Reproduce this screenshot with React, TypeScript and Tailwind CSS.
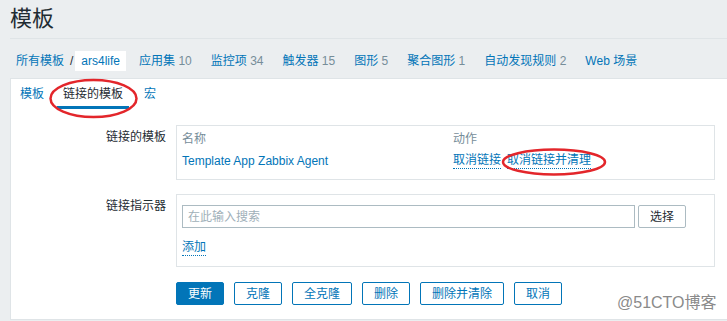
export default function App() {
  const nav: [string, string][] = [
    ["应用集", "10"],
    ["监控项", "34"],
    ["触发器", "15"],
    ["图形", "5"],
    ["聚合图形", "1"],
    ["自动发现规则", "2"],
    ["Web 场景", ""],
  ];
  const buttons = ["克隆", "全克隆", "删除", "删除并清除", "取消"];
  return (
    <div className="relative w-[727px] h-[321px] overflow-hidden bg-[#ebeef0] text-[12px] leading-[16px] text-[#1f2c33] font-[family-name:'Liberation_Sans','Noto_Sans_CJK_SC',sans-serif]">
      {/* title */}
      <div className="ml-[10px] h-[39px] border-b border-[#dfe4e7] pt-[6px]">
        <h1 className="text-[22px] leading-[26px] font-normal">模板</h1>
      </div>
      {/* breadcrumbs */}
      <div className="h-[39px] pt-[12px] flex items-start">
        <span className="pl-[16px] h-[20px] leading-[20px] text-[#0275b8]">所有模板</span>
        <span className="ml-[6px] mr-[2px] h-[20px] leading-[20px]">/</span>
        <span className="px-[6px] h-[20px] leading-[20px] bg-white text-[#0275b8]">ars4life</span>
        <div className="flex ml-[7px] gap-[7px]">
          {nav.map(([t, n]) => (
            <span key={t} className="px-[6px] h-[20px] leading-[20px] text-[#0275b8] whitespace-nowrap">
              {t}
              {n && <span className="text-[#768d99]"> {n}</span>}
            </span>
          ))}
        </div>
      </div>
      {/* panel */}
      <div className="ml-[10px] h-[242px] bg-white border-t border-l border-b border-[#dfe4e7]">
        {/* tabs */}
        <div className="h-[30px] flex pl-[3px]">
          <span className="px-[6px] flex items-center border-y-[3px] border-transparent text-[#0275b8]">模板</span>
          <span className="ml-[7px] px-[6px] flex items-center border-y-[3px] border-t-transparent border-b-[#0275b8] text-[#1f2c33]">链接的模板</span>
          <span className="ml-[9px] px-[6px] flex items-center border-y-[3px] border-transparent text-[#0275b8]">宏</span>
        </div>
        {/* row 1 */}
        <div className="mt-[16px] flex">
          <div className="w-[155px] text-right pt-[4px]">链接的模板</div>
          <div className="ml-[10px] w-[539px] border border-[#dfe4e7] pl-[5px] pt-[5px] pb-[10px]">
            <div className="grid grid-cols-[271px_1fr] text-[#768d99]">
              <span>名称</span>
              <span>动作</span>
            </div>
            <div className="grid grid-cols-[271px_1fr] mt-[6px]">
              <span className="text-[#0275b8]">Template App Zabbix Agent</span>
              <span className="flex gap-[6px] text-[#0275b8]">
                <span className="border-b border-dotted border-[#0275b8] leading-[15px] h-[16px]">取消链接</span>
                <span className="border-b border-dotted border-[#0275b8] leading-[15px] h-[16px]">取消链接并清理</span>
              </span>
            </div>
          </div>
        </div>
        {/* row 2 */}
        <div className="mt-[14px] flex">
          <div className="w-[155px] text-right pt-[4px]">链接指示器</div>
          <div className="ml-[10px] w-[539px] border border-[#dfe4e7] pl-[5px] pt-[10px] pb-[10px]">
            <div className="flex">
              <div className="w-[453px] h-[23px] border border-[#acbbc2] pl-[5px] flex items-center text-[#9fb0b9]">在此输入搜索</div>
              <button className="ml-[3px] h-[23px] px-[11px] border border-[#acbbc2] rounded-[2px] bg-white text-[#1f2c33] leading-[16px]">选择</button>
            </div>
            <div className="mt-[11px]">
              <span className="text-[#0275b8] border-b border-dotted border-[#0275b8] inline-block leading-[15px] h-[16px]">添加</span>
            </div>
          </div>
        </div>
        {/* buttons */}
        <div className="mt-[15px] ml-[165px] flex gap-[10px]">
          <button className="h-[23px] px-[11px] rounded-[2px] bg-[#0275b8] border border-[#0275b8] text-white leading-[16px]">更新</button>
          {buttons.map((b) => (
            <button key={b} className="h-[23px] px-[11px] rounded-[2px] bg-white border border-[#0275b8] text-[#0275b8] leading-[16px]">
              {b}
            </button>
          ))}
        </div>
      </div>
      {/* watermark */}
      <div className="absolute left-[617px] top-[294px] text-[16px] leading-[18px] text-[#8a8a8a] whitespace-nowrap">@51CTO博客</div>
      {/* annotations */}
      <svg className="absolute left-0 top-0 pointer-events-none" width="727" height="321">
        <ellipse cx="93.5" cy="98.5" rx="43" ry="18.5" fill="none" stroke="#e3262b" strokeWidth="2.5" />
        <ellipse cx="554" cy="162" rx="51" ry="12.5" fill="none" stroke="#e3262b" strokeWidth="2.5" />
      </svg>
    </div>
  );
}
